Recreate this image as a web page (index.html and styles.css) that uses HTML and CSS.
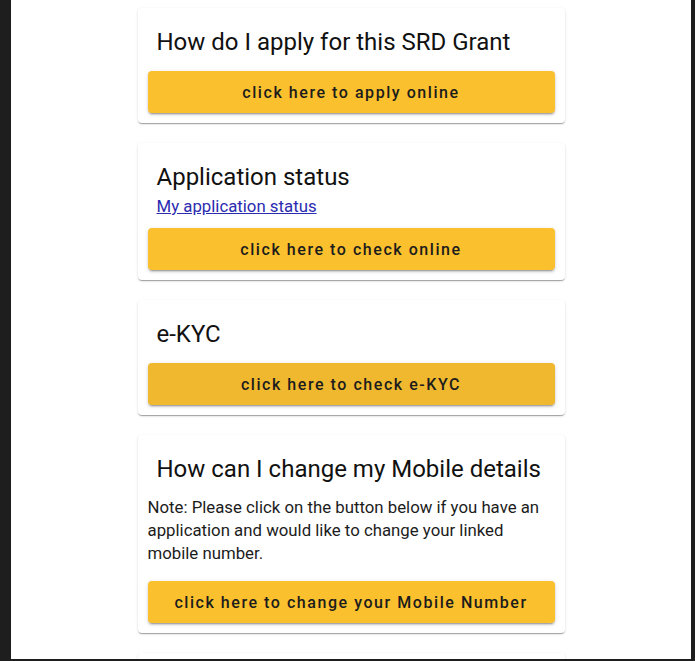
FILE: index.html
```html
<!DOCTYPE html>
<html lang="en">
<head>
<meta charset="utf-8">
<title>SRD Grant</title>
<link rel="stylesheet" href="styles.css">
</head>
<body>
<div class="frame">
  <main class="list">
    <section class="card">
      <h2 class="card-title">How do I apply for this SRD Grant</h2>
      <button class="btn btn-gap">click here to apply online</button>
    </section>
    <section class="card">
      <h2 class="card-title tight">Application status</h2>
      <a class="status-link" href="#">My application status</a>
      <button class="btn">click here to check online</button>
    </section>
    <section class="card">
      <h2 class="card-title">e-KYC</h2>
      <button class="btn btn-gap btn-dark">click here to check e-KYC</button>
    </section>
    <section class="card">
      <h2 class="card-title">How can I change my Mobile details</h2>
      <p class="note">Note: Please click on the button below if you have an application and would like to change your linked mobile number.</p>
      <button class="btn">click here to change your Mobile Number</button>
    </section>
    <section class="card">
      <div class="card-body-empty"></div>
    </section>
  </main>
</div>
</body>
</html>
```

FILE: styles.css
```css
* { box-sizing: border-box; }
html, body {
  margin: 0;
  padding: 0;
  background: #1e1e1e;
  font-family: Roboto, "Liberation Sans", sans-serif;
}
.frame {
  margin: 0 4px 0 11px;
  height: 659px;
  background: #ffffff;
  overflow: hidden;
}
.list {
  width: 427px;
  margin: 0 auto;
  padding-top: 8px;
  display: flex;
  flex-direction: column;
  gap: 20px;
}
.card {
  background: #fff;
  border-radius: 4px;
  padding: 10px;
  box-shadow: 0 2px 1px -1px rgba(0,0,0,0.2), 0 1px 1px 0 rgba(0,0,0,0.14), 0 1px 3px 0 rgba(0,0,0,0.12);
  display: flex;
  flex-direction: column;
}
.card-title {
  margin: 10px 0 0;
  padding-left: 9px;
  font-size: 24px;
  line-height: 28px;
  font-weight: 400;
  color: #111111;
}
.card-title.tight { margin-bottom: 3px; }
.status-link {
  padding-left: 9px;
  font-size: 16.8px;
  line-height: 24px;
  color: #2b2bb0;
  text-decoration: underline;
  margin-bottom: 10px;
  align-self: flex-start;
}
.note {
  margin: 13px 0 16px;
  font-size: 16.8px;
  line-height: 23px;
  color: #1c1c1c;
}
.btn {
  height: 42px;
  border: none;
  border-radius: 4px;
  background: #fbc02d;
  color: #1c1c1c;
  font-family: Roboto, "Liberation Sans", sans-serif;
  font-size: 16px;
  font-weight: 500;
  letter-spacing: 1.55px;
  box-shadow: 0 3px 1px -2px rgba(0,0,0,0.2), 0 2px 2px 0 rgba(0,0,0,0.14), 0 1px 5px 0 rgba(0,0,0,0.12);
  cursor: pointer;
}
.btn-gap { margin-top: 15px; }
.btn-dark { background: #f0b82e; }
.card-body-empty { height: 60px; }
```
